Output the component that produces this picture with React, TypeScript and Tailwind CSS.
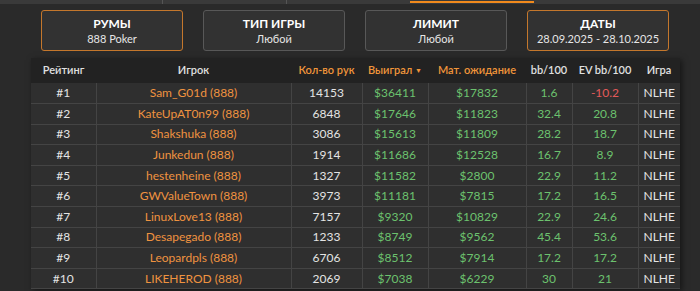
import React from 'react';

interface Row {
  rank: number;
  name: string;
  hands: number;
  won: number;
  ev: number;
  bb: string;
  evbb: string;
}

const rows: Row[] = [
  { rank: 1, name: 'Sam_G01d', hands: 14153, won: 36411, ev: 17832, bb: '1.6', evbb: '-10.2' },
  { rank: 2, name: 'KateUpAT0n99', hands: 6848, won: 17646, ev: 11823, bb: '32.4', evbb: '20.8' },
  { rank: 3, name: 'Shakshuka', hands: 3086, won: 15613, ev: 11809, bb: '28.2', evbb: '18.7' },
  { rank: 4, name: 'Junkedun', hands: 1914, won: 11686, ev: 12528, bb: '16.7', evbb: '8.9' },
  { rank: 5, name: 'hestenheine', hands: 1327, won: 11582, ev: 2800, bb: '22.9', evbb: '11.2' },
  { rank: 6, name: 'GWValueTown', hands: 3973, won: 11181, ev: 7815, bb: '17.2', evbb: '16.5' },
  { rank: 7, name: 'LinuxLove13', hands: 7157, won: 9320, ev: 10829, bb: '22.9', evbb: '24.6' },
  { rank: 8, name: 'Desapegado', hands: 1233, won: 8749, ev: 9562, bb: '45.4', evbb: '53.6' },
  { rank: 9, name: 'Leopardpls', hands: 6706, won: 8512, ev: 7914, bb: '17.2', evbb: '17.2' },
  { rank: 10, name: 'LIKEHEROD', hands: 2069, won: 7038, ev: 6229, bb: '30', evbb: '21' },
];

const filters = [
  { title: 'РУМЫ', value: '888 Poker', active: true },
  { title: 'ТИП ИГРЫ', value: 'Любой', active: false },
  { title: 'ЛИМИТ', value: 'Любой', active: false },
  { title: 'ДАТЫ', value: '28.09.2025 - 28.10.2025', active: true },
];

const tdBase = 'border-r border-[#444] text-center';

const App: React.FC = () => {
  return (
    <div className="w-[700px] h-[291px] overflow-hidden bg-[#2a2a2a] font-['Lato','Liberation_Sans',sans-serif]">
      {/* top tabs strip */}
      <div className="flex h-[4px] bg-[#3a3a3a]">
        <div className="w-[163px] border-r border-[#555]" />
        <div className="w-[124px] border-r border-[#555]" />
        <div className="w-[123px]" />
        <div className="w-[124px] flex flex-col">
          <div className="h-[1px]" />
          <div className="h-[2px] bg-[#f28a1c]" />
        </div>
      </div>

      {/* filters */}
      <div className="flex gap-[20px] pl-[41px] pt-[6px]">
        {filters.map((f) => (
          <button
            key={f.title}
            className={`w-[142px] h-[41px] rounded-[3px] border bg-[#323232] flex flex-col items-center justify-center leading-none ${
              f.active ? 'border-[#c4772c]' : 'border-[#585858]'
            }`}
          >
            <span className="text-[12px] font-bold text-white">{f.title}</span>
            <span className="text-[11px] text-[#e6e6e6] mt-[3px]">{f.value}</span>
          </button>
        ))}
      </div>

      {/* table */}
      <div className="ml-[31px] mt-[7px] w-[649px] bg-[#2f2f2f] shadow-[2px_2px_6px_rgba(0,0,0,0.5)]">
        <table className="w-full table-fixed border-collapse text-[12px]">
          <colgroup>
            <col className="w-[65px]" />
            <col className="w-[195px]" />
            <col className="w-[71px]" />
            <col className="w-[66px]" />
            <col className="w-[98px]" />
            <col className="w-[46px]" />
            <col className="w-[66px]" />
            <col className="w-[42px]" />
          </colgroup>
          <thead>
            <tr className="h-[25px] bg-[#222222] text-[11px]">
              <th className="text-[#e0e0e0] font-semibold">Рейтинг</th>
              <th className="text-[#e0e0e0] font-semibold">Игрок</th>
              <th className="text-[#f0953a] font-semibold">Кол-во рук</th>
              <th className="text-[#f0953a] font-semibold">
                Выиграл <span className="text-[7px] align-[1px]">▼</span>
              </th>
              <th className="text-[#f0953a] font-semibold">Мат. ожидание</th>
              <th className="text-[#e0e0e0] font-semibold">bb/100</th>
              <th className="text-[#e0e0e0] font-semibold">EV bb/100</th>
              <th className="text-[#e0e0e0] font-semibold">Игра</th>
            </tr>
          </thead>
          <tbody>
            {rows.map((r) => (
              <tr key={r.rank} className="h-[20.6px] border-b border-[#444]">
                <td className={`${tdBase} text-[#e4e4e4]`}>#{r.rank}</td>
                <td className={`${tdBase} text-[#ef9340]`}>{r.name} (888)</td>
                <td className={`${tdBase} text-[#e4e4e4]`}>{r.hands}</td>
                <td className={`${tdBase} text-[#6cc26e]`}>${r.won}</td>
                <td className={`${tdBase} text-[#6cc26e]`}>${r.ev}</td>
                <td className={`${tdBase} text-[#6cc26e]`}>{r.bb}</td>
                <td className={`${tdBase} ${r.evbb.startsWith('-') ? 'text-[#e35a5a]' : 'text-[#6cc26e]'}`}>
                  {r.evbb}
                </td>
                <td className="text-center text-[#e4e4e4]">NLHE</td>
              </tr>
            ))}
          </tbody>
        </table>
      </div>
    </div>
  );
};

export default App;
